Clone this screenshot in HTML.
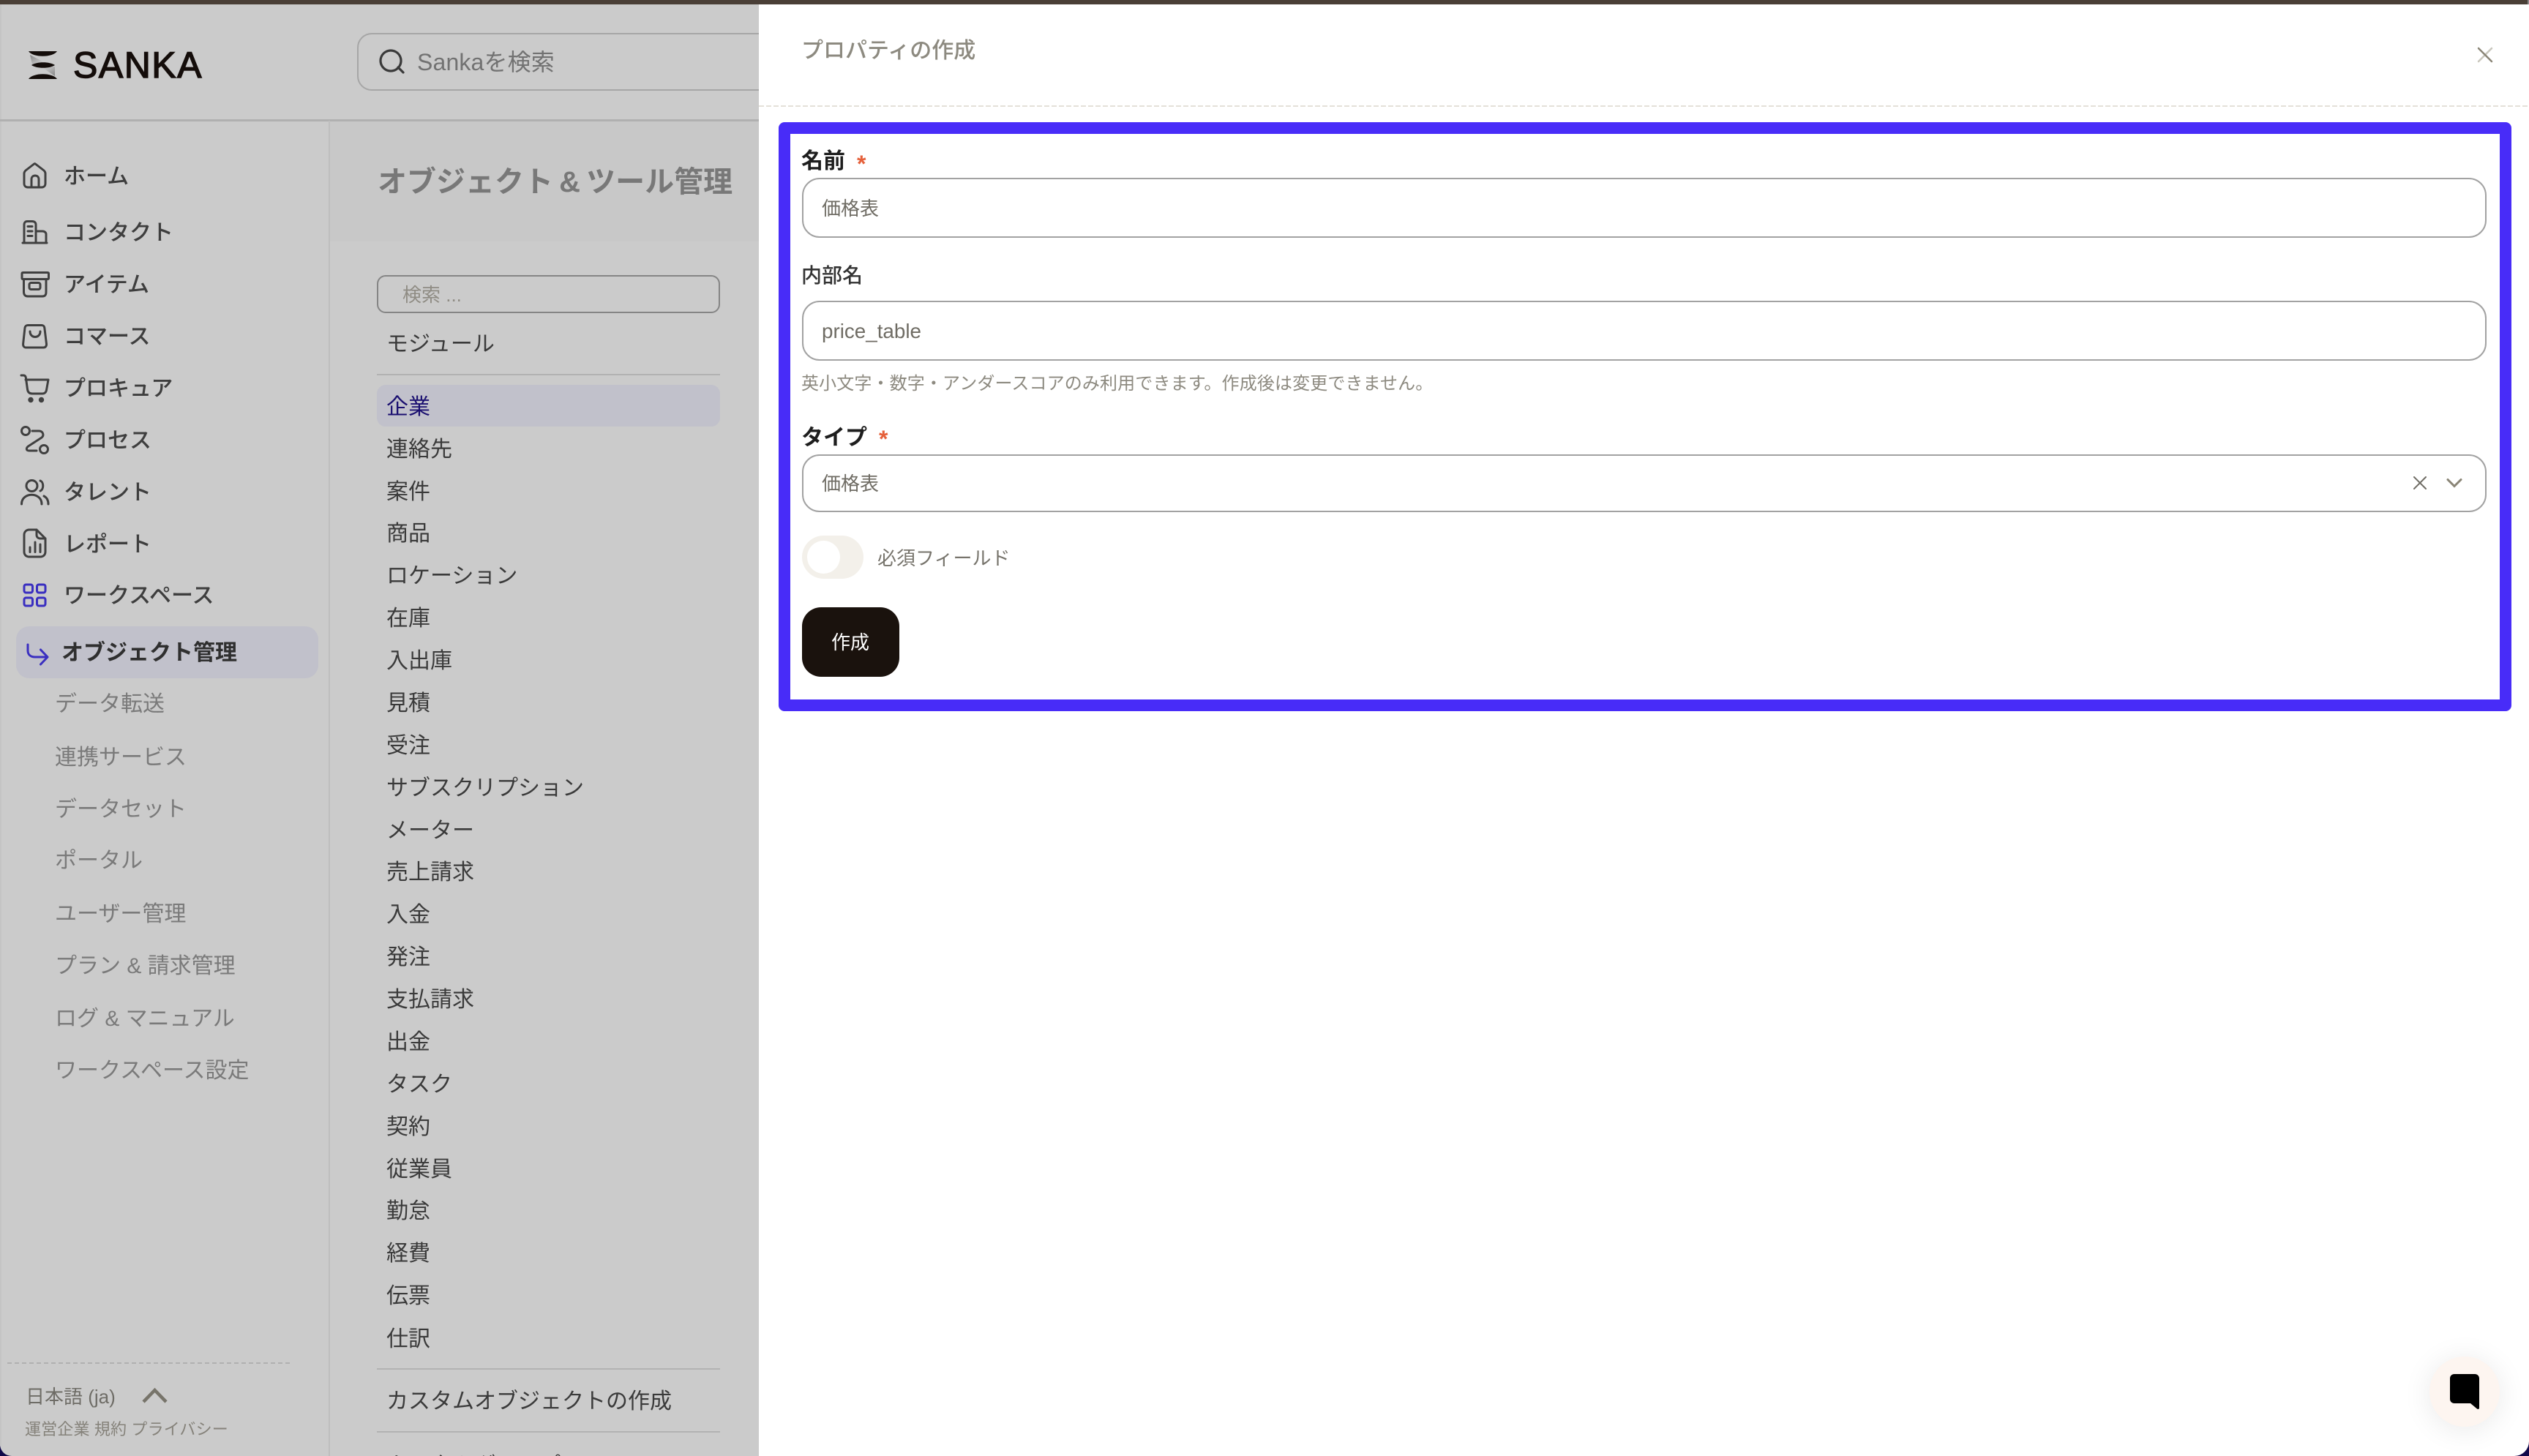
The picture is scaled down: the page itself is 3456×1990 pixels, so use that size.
<!DOCTYPE html>
<html lang="ja">
<head>
<meta charset="utf-8">
<title>Sanka</title>
<style>
html,body{margin:0;padding:0;width:3456px;height:1990px;overflow:hidden;background:#10094a;}
#root{position:relative;width:3456px;height:1990px;overflow:hidden;font-family:"Liberation Sans","Noto Sans CJK JP",sans-serif;}
.a{position:absolute;}
.t{position:absolute;white-space:nowrap;line-height:40px;height:40px;}
.n{font-size:30px;font-weight:500;color:#3e3e3e;left:87px;margin-top:1px;}
.s{font-size:30px;color:#7a7a7a;left:75px;margin-top:1px;}
.m{font-size:30px;color:#3a3a3a;left:528px;margin-top:1px;}
svg.ic{position:absolute;left:0;top:0;width:3456px;height:1990px;pointer-events:none;}
.inp{position:absolute;left:1096px;width:2302px;box-sizing:border-box;border:2.5px solid #a2a2a2;border-radius:24px;background:#fff;}
</style>
</head>
<body>
<div id="root">
<!-- dimmed background -->
<div class="a" style="left:0;top:0;width:1037px;height:1990px;background:#cbcbcb;border-bottom-left-radius:16px;"></div>
<div class="a" style="left:0;top:6px;width:2px;height:1970px;background:#c4c4c4;"></div>
<div class="a" style="left:451px;top:166px;width:586px;height:164px;background:#c8c8c8;"></div>
<div class="a" style="left:0;top:163px;width:1037px;height:2.5px;background:#b0b0b0;"></div>
<div class="a" style="left:449px;top:165px;width:2px;height:1825px;background:#bebebe;"></div>

<!-- logo -->
<svg class="ic" viewBox="0 0 3456 1990">
<defs>
<linearGradient id="g1" x1="0" y1="0" x2="1" y2="1"><stop offset="0" stop-color="#858585"/><stop offset="1" stop-color="#dcdcdc"/></linearGradient>
<linearGradient id="g2" x1="0" y1="0" x2="1" y2="1"><stop offset="0" stop-color="#dcdcdc"/><stop offset="1" stop-color="#858585"/></linearGradient>
</defs>
<path d="M41 75L62 86L44 88Z" fill="url(#g1)"/>
<path d="M75 91L56 91L75 104Z" fill="url(#g2)"/>
<path d="M39 70H78C72 79 45 79 39 70Z" fill="#140d0a"/>
<path d="M43 89C50 84 68 84 75 89C68 94 50 94 43 89Z" fill="#140d0a"/>
<path d="M39 108H78C72 99 45 99 39 108Z" fill="#140d0a"/>
</svg>
<div class="t" style="left:100px;top:69px;font-size:50px;line-height:40px;color:#140d0a;letter-spacing:1.5px;-webkit-text-stroke:1.4px #140d0a;">SANKA</div>

<!-- top search -->
<div class="a" style="left:487.5px;top:45px;width:600px;height:79px;box-sizing:border-box;border:2.5px solid #a6a6a6;border-radius:20px;"></div>
<div class="t" style="left:570px;top:65px;font-size:32px;letter-spacing:.15px;color:#727272;">Sankaを検索</div>

<!-- page title -->
<div class="t" style="left:516px;top:229px;font-size:40px;font-weight:700;word-spacing:-3px;color:#787878;">オブジェクト &amp; ツール管理</div>

<!-- nav -->
<div class="t n" style="top:221px;">ホーム</div>
<div class="t n" style="top:298px;">コンタクト</div>
<div class="t n" style="top:369px;">アイテム</div>
<div class="t n" style="top:440px;">コマース</div>
<div class="t n" style="top:511px;">プロキュア</div>
<div class="t n" style="top:582px;">プロセス</div>
<div class="t n" style="top:653px;">タレント</div>
<div class="t n" style="top:724px;">レポート</div>
<div class="t n" style="top:794px;">ワークスペース</div>
<div class="a" style="left:22px;top:856px;width:413px;height:71px;background:#c1c1cb;border-radius:18px;"></div>
<div class="t n" style="left:84px;top:872px;font-weight:700;color:#2f2f2f;">オブジェクト管理</div>

<div class="t s" style="top:942px;">データ転送</div>
<div class="t s" style="top:1015px;">連携サービス</div>
<div class="t s" style="top:1086px;">データセット</div>
<div class="t s" style="top:1156px;">ポータル</div>
<div class="t s" style="top:1229px;">ユーザー管理</div>
<div class="t s" style="top:1300px;">プラン &amp; 請求管理</div>
<div class="t s" style="top:1372px;">ログ &amp; マニュアル</div>
<div class="t s" style="top:1443px;">ワークスペース設定</div>

<!-- nav icons -->
<svg class="ic" viewBox="0 0 3456 1990" fill="none" stroke="#404040" stroke-width="3" stroke-linecap="round" stroke-linejoin="round">
<path d="M534 69a14 14 0 1 0 .01 0ZM544 92L551 99" stroke="#3a3a3a" stroke-width="3.2"/>
<path d="M33 237C33 235 34 234 35 233L46 224.5C47 223.5 48 223.5 49 224.5L60 233C61 234 62 235 62 237V251C62 254 60 256 57 256H38C35 256 33 254 33 251Z"/>
<path d="M43 256V245C43 242 45 240 48 240C51 240 53 242 53 245V256"/>
<path d="M31 332H64M33 332V307C33 304 35 302.5 37 302.5H44C47 302.5 49 304 49 307V332M49 316H58C61 316 63 318 63 320V332M38 309.5H44M38 316H44M38 322.5H44"/>
<path d="M31.5 372.5H65C66 372.5 66.5 373 66.5 374V380C66.5 381 66 381.5 65 381.5H31.5C30.5 381.5 30 381 30 380V374C30 373 30.5 372.5 31.5 372.5Z"/>
<path d="M32.5 382V399C32.5 403 34.5 405 38 405H58C61.5 405 63 403 63 399V382"/>
<rect x="40" y="386.5" width="15" height="9" rx="2.5"/>
<path d="M38 444.5H57C59 444.5 60.5 446 60.8 448L63.5 470C63.8 473 62 475 59.5 475H35.5C33 475 31.3 473 31.6 470L34 448C34.3 446 36 444.5 38 444.5Z"/>
<path d="M41 453C41 463 55 463 55 453" />
<path d="M29 513H32C34 513 35 514.5 35.3 516L37.5 532C38 536 40 538 44 538H58C61 538 63 536 63.5 533L66 519H35"/>
<circle cx="42" cy="546.5" r="2.2" fill="#404040"/><circle cx="56.5" cy="546.5" r="2.2" fill="#404040"/>
<circle cx="35" cy="589" r="5.5"/><circle cx="60" cy="614" r="5.5"/>
<path d="M44 589H53C59 589 60.5 595 57 598L38.5 610C35 613 36 616 40 616H50"/>
<circle cx="43.5" cy="664" r="7.5"/>
<path d="M55 657C60 659 60 669 55 671M29.5 689C29.5 672 57 672 57 689M60 678C64 680 66 684 66 689"/>
<path d="M40 724H50L62 736V754C62 758.5 59 761 55 761H40C36 761 33 758.5 33 754V731C33 727 36 724 40 724Z"/>
<path d="M50 724V731C50 734 52 736 55 736H62M41 748V754.5M48 741V754.5M55 744V754.5" />
<g stroke="#3a2fc0"><rect x="33" y="799" width="11.5" height="11" rx="2.5"/><rect x="50.5" y="799" width="11.5" height="11" rx="2.5"/><rect x="33" y="817" width="11.5" height="11" rx="2.5"/><rect x="50.5" y="817" width="11.5" height="11" rx="2.5"/>
<path d="M38 881V889C38 895 42 898 48 898H64.5M55.5 888L65 898L55.5 908"/></g>
</svg>

<!-- module column -->
<div class="a" style="left:515px;top:376px;width:469px;height:52px;box-sizing:border-box;border:2.5px solid #858585;border-radius:12px;"></div>
<div class="t" style="left:550px;top:383px;font-size:26px;color:#8f8c84;">検索 ...</div>
<div class="t m" style="top:450px;">モジュール</div>
<div class="a" style="left:515px;top:511px;width:469px;height:2px;background:#b2b2b2;"></div>
<div class="a" style="left:515px;top:526px;width:469px;height:57px;background:#c1c1cb;border-radius:12px;"></div>
<div class="t m" style="top:536px;color:#1a0f70;">企業</div>
<div class="t m" style="top:594px;">連絡先</div>
<div class="t m" style="top:652px;">案件</div>
<div class="t m" style="top:709px;">商品</div>
<div class="t m" style="top:767px;">ロケーション</div>
<div class="t m" style="top:825px;">在庫</div>
<div class="t m" style="top:883px;">入出庫</div>
<div class="t m" style="top:941px;">見積</div>
<div class="t m" style="top:999px;">受注</div>
<div class="t m" style="top:1057px;">サブスクリプション</div>
<div class="t m" style="top:1115px;">メーター</div>
<div class="t m" style="top:1172px;">売上請求</div>
<div class="t m" style="top:1230px;">入金</div>
<div class="t m" style="top:1288px;">発注</div>
<div class="t m" style="top:1346px;">支払請求</div>
<div class="t m" style="top:1404px;">出金</div>
<div class="t m" style="top:1462px;">タスク</div>
<div class="t m" style="top:1520px;">契約</div>
<div class="t m" style="top:1578px;">従業員</div>
<div class="t m" style="top:1635px;">勤怠</div>
<div class="t m" style="top:1693px;">経費</div>
<div class="t m" style="top:1751px;">伝票</div>
<div class="t m" style="top:1810px;">仕訳</div>
<div class="a" style="left:515px;top:1870px;width:469px;height:2px;background:#b2b2b2;"></div>
<div class="t m" style="top:1895px;">カスタムオブジェクトの作成</div>
<div class="a" style="left:515px;top:1956px;width:469px;height:2px;background:#b2b2b2;"></div>
<div class="t m" style="top:1983px;">カスタムグループ</div>

<!-- sidebar footer -->
<div class="a" style="left:10px;top:1862px;width:386px;height:2px;background:repeating-linear-gradient(90deg,#b0b0b0 0 6px,transparent 6px 10px);"></div>
<div class="t" style="left:35px;top:1889px;font-size:26px;color:#6e6c66;">日本語 (ja)</div>
<div class="t" style="left:34px;top:1934px;font-size:22px;letter-spacing:.15px;color:#85827a;">運営企業 規約 プライバシー</div>
<svg class="ic" viewBox="0 0 3456 1990" fill="none"><path d="M196 1916L211.5 1900L227 1916" stroke="#77746a" stroke-width="4.5"/></svg>

<!-- panel -->
<div class="a" style="left:1037px;top:0;width:2419px;height:1990px;background:#fff;border-bottom-right-radius:20px;"></div>
<div class="a" style="left:0;top:0;width:3456px;height:6px;background:#4a3f37;"></div>
<div class="a" style="left:3454px;top:0;width:2px;height:6px;background:#8a8a8a;"></div>
<div class="t" style="left:1095px;top:50px;font-size:30px;font-weight:500;color:#8d8a80;">プロパティの作成</div>
<div class="a" style="left:1037px;top:144px;width:2419px;height:2px;background:repeating-linear-gradient(90deg,#e4e1d9 0 7px,transparent 7px 10px);"></div>

<!-- blue frame -->
<div class="a" style="left:1064px;top:167px;width:2368px;height:805px;box-sizing:border-box;border:16px solid #482cf8;border-radius:8px;"></div>

<!-- form -->
<div class="t" style="left:1095px;top:201px;font-size:30px;font-weight:700;color:#1e1e1e;">名前</div>
<div class="t" style="left:1171px;top:204px;font-size:32px;font-weight:700;color:#e5603a;">*</div>
<div class="inp" style="top:243px;height:82px;"></div>
<div class="t" style="left:1123px;top:265px;font-size:26px;color:#6f6c64;">価格表</div>

<div class="t" style="left:1095px;top:357px;font-size:28px;font-weight:500;color:#333;">内部名</div>
<div class="inp" style="top:411px;height:82px;"></div>
<div class="t" style="left:1123px;top:433px;font-size:27.8px;color:#6f6c64;">price_table</div>
<div class="t" style="left:1095px;top:505px;font-size:24px;letter-spacing:.13px;color:#8d8a80;">英小文字・数字・アンダースコアのみ利用できます。作成後は変更できません。</div>

<div class="t" style="left:1095px;top:579px;font-size:30px;font-weight:700;color:#1e1e1e;">タイプ</div>
<div class="t" style="left:1201px;top:580px;font-size:32px;font-weight:700;color:#e5603a;">*</div>
<div class="inp" style="top:621px;height:79px;"></div>
<div class="t" style="left:1123px;top:641px;font-size:26px;color:#6f6c64;">価格表</div>

<div class="a" style="left:1095.5px;top:732px;width:84px;height:59px;background:#f3f0ea;border-radius:30px;"></div>
<div class="a" style="left:1102.5px;top:739px;width:45px;height:45px;background:#fff;border-radius:50%;"></div>
<div class="t" style="left:1199px;top:743px;font-size:26px;color:#77746c;">必須フィールド</div>

<div class="a" style="left:1095.5px;top:830px;width:133px;height:95px;background:#1a120d;border-radius:26px;"></div>
<div class="t" style="left:1136px;top:858px;font-size:26px;color:#fff;">作成</div>

<!-- panel icons -->
<svg class="ic" viewBox="0 0 3456 1990" fill="none" stroke-linecap="round">
<path d="M3405 66L3387 84" stroke="#c9c6bc" stroke-width="2.5"/>
<path d="M3387 66L3405 84" stroke="#8a8576" stroke-width="2.5"/>
<path d="M3299 652L3315 668M3315 652L3299 668" stroke="#6f6c64" stroke-width="2"/>
<path d="M3345 655.5L3354 664.5L3363 655.5" stroke="#8a8576" stroke-width="3"/>
</svg>

<!-- chat button -->
<div class="a" style="left:3320px;top:1854px;width:96px;height:96px;border-radius:50%;background:#fdf5f0;box-shadow:0 4px 40px rgba(0,0,0,.09);"></div>
<svg class="ic" viewBox="0 0 3456 1990"><path d="M3354 1878H3382C3385.5 1878 3388 1880.5 3388 1884V1924C3388 1926 3386.5 1926.5 3385 1925.5L3376 1918H3354C3350.5 1918 3348 1915.5 3348 1912V1884C3348 1880.5 3350.5 1878 3354 1878Z" fill="#000"/></svg>
</div>
</body>
</html>
